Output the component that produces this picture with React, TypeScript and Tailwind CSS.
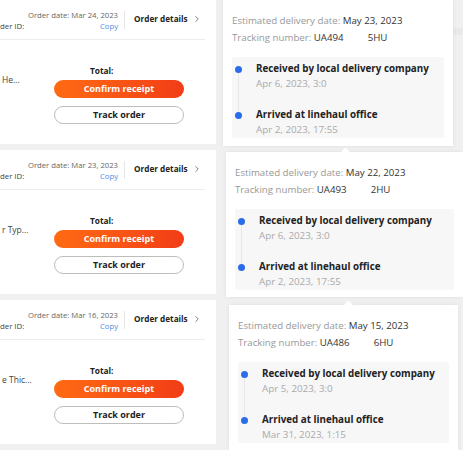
import { ChevronRight } from "lucide-react";

interface Order {
  date: string;
  name: string;
  eta: string;
  trackA: string;
  trackB: string;
  first: string;
  second: string;
}

const orders: Order[] = [
  { date: "Mar 24, 2023", name: "He...", eta: "May 23, 2023", trackA: "UA494", trackB: "5HU", first: "Apr 6, 2023, 3:0", second: "Apr 2, 2023, 17:55" },
  { date: "Mar 23, 2023", name: "r Typ...", eta: "May 22, 2023", trackA: "UA493", trackB: "2HU", first: "Apr 6, 2023, 3:0", second: "Apr 2, 2023, 17:55" },
  { date: "Mar 16, 2023", name: "e Thic...", eta: "May 15, 2023", trackA: "UA486", trackB: "6HU", first: "Apr 5, 2023, 3:0", second: "Mar 31, 2023, 1:15" },
];

function OrderCard({ order }: { order: Order }) {
  return (
    <div className="w-[216px] h-[144px] bg-white overflow-hidden shrink-0">
      {/* header */}
      <div className="h-[40px] mr-[11px] border-b border-[#ececec] flex items-center">
        <div className="w-[118px] flex items-end justify-between pt-[2px]">
          <span className="text-[7.8px] text-[#444] leading-[11px]">der ID:</span>
          <div className="text-right text-[7.7px] leading-[11px] whitespace-nowrap">
            <div className="text-[#666]">Order date: {order.date}</div>
            <div className="text-[#4b8ce6]">Copy</div>
          </div>
        </div>
        <div className="ml-[6px] w-px h-[18px] bg-[#e6e6e6]" />
        <div className="flex items-center pl-[9px]">
          <span className="text-[8.2px] font-bold text-[#222] whitespace-nowrap">Order details</span>
          <ChevronRight className="ml-[4px] w-[10px] h-[10px] text-[#444]" strokeWidth={1.6} />
        </div>
      </div>
      {/* body */}
      <div className="flex pt-[25px]">
        <div className="w-[54px] pl-[2px]">
          <span className="whitespace-nowrap text-[8.5px] text-[#444] leading-[11px]">{order.name}</span>
        </div>
        <div className="w-[130px] flex flex-col">
          <span className="ml-[36px] text-[8.3px] font-bold text-[#222] leading-[11px]">Total:</span>
          <button className="mt-[4px] w-full h-[18px] rounded-full bg-gradient-to-r from-[#ff6a12] to-[#f23c17] text-white text-[9px] font-bold">
            Confirm receipt
          </button>
          <button className="mt-[8px] w-full h-[18px] rounded-full border border-[#bdbdbd] bg-white text-[#222] text-[9px] font-bold">
            Track order
          </button>
        </div>
      </div>
    </div>
  );
}

function Tracking({ order, notch }: { order: Order; notch: boolean }) {
  return (
    <div className="relative h-full bg-white shadow-[0_0_4px_rgba(0,0,0,0.08)] px-[9px] pt-[12px]">
      {notch && (
        <div className="absolute -top-[3px] left-[116px] w-[7px] h-[7px] bg-white rotate-45" />
      )}
      <div className="text-[9.7px] leading-[17px] whitespace-nowrap">
        <div>
          <span className="text-[#999]">Estimated delivery date: </span>
          <span className="text-[#333]">{order.eta}</span>
        </div>
        <div>
          <span className="text-[#999]">Tracking number: </span>
          <span className="text-[#333]">{order.trackA}</span>
          <span className="text-[#333] ml-[24px]">{order.trackB}</span>
        </div>
      </div>
      <div className="relative mt-[11px] h-[81px] bg-[#f7f7f7] rounded-[2px] pl-[24px] pt-[4px]">
        <div className="absolute left-[6px] top-[12px] w-px h-[46px] bg-[#e8e8e8]" />
        <div className="absolute left-[3px] top-[9px] w-[7px] h-[7px] rounded-full bg-[#2b6de8]" />
        <div className="absolute left-[3px] top-[55px] w-[7px] h-[7px] rounded-full bg-[#2b6de8]" />
        <div className="text-[9.8px] leading-[15px] whitespace-nowrap">
          <div className="font-bold text-[#222]">Received by local delivery company</div>
          <div className="text-[#aaa]">{order.first}</div>
          <div className="font-bold text-[#222] mt-[16px]">Arrived at linehaul office</div>
          <div className="text-[#aaa]">{order.second}</div>
        </div>
      </div>
    </div>
  );
}

export default function App() {
  return (
    <div
      className="w-[463px] h-[450px] overflow-hidden bg-[#f0f0f0]"
      style={{ fontFamily: '"Open Sans", "Liberation Sans", sans-serif' }}
    >
      {/* strip 1 */}
      <div className="h-[147px] flex items-start">
        <OrderCard order={orders[0]} />
        <div className="ml-[7px] w-[230px] h-[146px] shrink-0">
          <Tracking order={orders[0]} notch={false} />
        </div>
        <div className="flex-1 pt-[28px]">
          <div className="h-[7px] bg-[#e9e9e9]" />
        </div>
      </div>
      {/* strip 2 */}
      <div className="h-[150px] flex items-start">
        <div className="mt-[3px]">
          <OrderCard order={orders[1]} />
        </div>
        <div className="ml-[10px] mt-[5px] w-[237px] h-[145px] shrink-0">
          <Tracking order={orders[1]} notch={true} />
        </div>
      </div>
      {/* strip 3 */}
      <div className="h-[153px] flex items-start">
        <div className="mt-[3px]">
          <OrderCard order={orders[2]} />
        </div>
        <div className="ml-[13px] mt-[8px] w-[229px] h-[145px] shrink-0">
          <Tracking order={orders[2]} notch={true} />
        </div>
      </div>
    </div>
  );
}
